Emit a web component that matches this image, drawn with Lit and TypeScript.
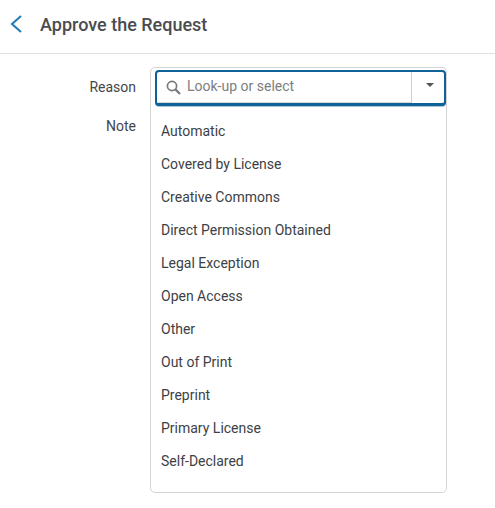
import { LitElement, html, css } from "lit";
import { customElement } from "lit/decorators.js";

const OPTIONS = [
  "Automatic",
  "Covered by License",
  "Creative Commons",
  "Direct Permission Obtained",
  "Legal Exception",
  "Open Access",
  "Other",
  "Out of Print",
  "Preprint",
  "Primary License",
  "Self-Declared",
];

@customElement("app-root")
export class AppRoot extends LitElement {
  static styles = css`
    :host {
      display: block;
      width: 495px;
      height: 508px;
      background: #fff;
      font-family: Roboto, "Liberation Sans", sans-serif;
      font-size: 14px;
      color: #3d3f41;
      overflow: hidden;
    }
    .header {
      height: 48px;
      padding-bottom: 5px;
      box-sizing: content-box;
      border-bottom: 1px solid #e0e0e0;
      display: flex;
      align-items: center;
      padding-left: 10px;
      gap: 18px;
    }
    .back {
      display: block;
      width: 12px;
      height: 18px;
    }
    .title {
      font-size: 18px;
      font-weight: 500;
      color: #4a4c4e;
    }
    .body {
      display: flex;
      padding-top: 13px;
    }
    .labels {
      width: 136px;
      display: flex;
      flex-direction: column;
      align-items: flex-end;
      padding-top: 12px;
      gap: 22px;
      line-height: 17px;
      color: #44464a;
    }
    .panel {
      margin-left: 14px;
      width: 297px;
      height: 426px;
      box-sizing: border-box;
      border: 1px solid #d4d4d4;
      border-radius: 5px;
      padding: 2px 0 0 4px;
    }
    .field {
      width: 291px;
      height: 36px;
      box-sizing: border-box;
      border: 2px solid #0f6298;
      border-bottom-width: 3px;
      border-radius: 4px;
      display: flex;
      align-items: stretch;
      background: #fff;
      box-shadow: 0 1px 0 rgba(15, 98, 152, 0.35);
    }
    .input {
      flex: 1;
      display: flex;
      align-items: center;
      gap: 6px;
      padding-left: 9px;
      padding-bottom: 3px;
      border-right: 1px solid #cfcfcf;
      border-bottom: 1px solid #d8d8d8;
      color: #7c7e80;
    }
    .search {
      width: 15px;
      height: 15px;
      display: block;
      margin-top: 3px;
    }
    .caret {
      width: 32px;
      display: flex;
      align-items: center;
      justify-content: center;
      padding-bottom: 5px;
      padding-left: 4px;
      box-sizing: border-box;
    }
    .tri {
      display: block;
      width: 8px;
      height: 4px;
    }
    .list {
      list-style: none;
      margin: 9px 0 0;
      padding: 0 0 0 6px;
    }
    .list li {
      height: 33px;
      line-height: 33px;
      color: #3d4145;
    }
  `;

  render() {
    return html`
      <div class="header">
        <svg class="back" viewBox="0 0 12 18" fill="none" stroke="#1f7ab8" stroke-width="2">
          <path d="M11 1 L2 9 L11 17" />
        </svg>
        <div class="title">Approve the Request</div>
      </div>
      <div class="body">
        <div class="labels">
          <div>Reason</div>
          <div>Note</div>
        </div>
        <div class="panel">
          <div class="field">
            <div class="input">
              <svg class="search" viewBox="0 0 15 15" fill="none" stroke="#77797b" stroke-width="1.7">
                <circle cx="6" cy="6" r="4.6" />
                <path d="M9.4 9.4 L14 14" stroke-width="2.2" />
              </svg>
              <span>Look-up or select</span>
            </div>
            <div class="caret">
              <svg class="tri" viewBox="0 0 8 4"><path d="M0 0 H8 L4 4 Z" fill="#555" /></svg>
            </div>
          </div>
          <ul class="list">
            ${OPTIONS.map((o) => html`<li>${o}</li>`)}
          </ul>
        </div>
      </div>
    `;
  }
}
